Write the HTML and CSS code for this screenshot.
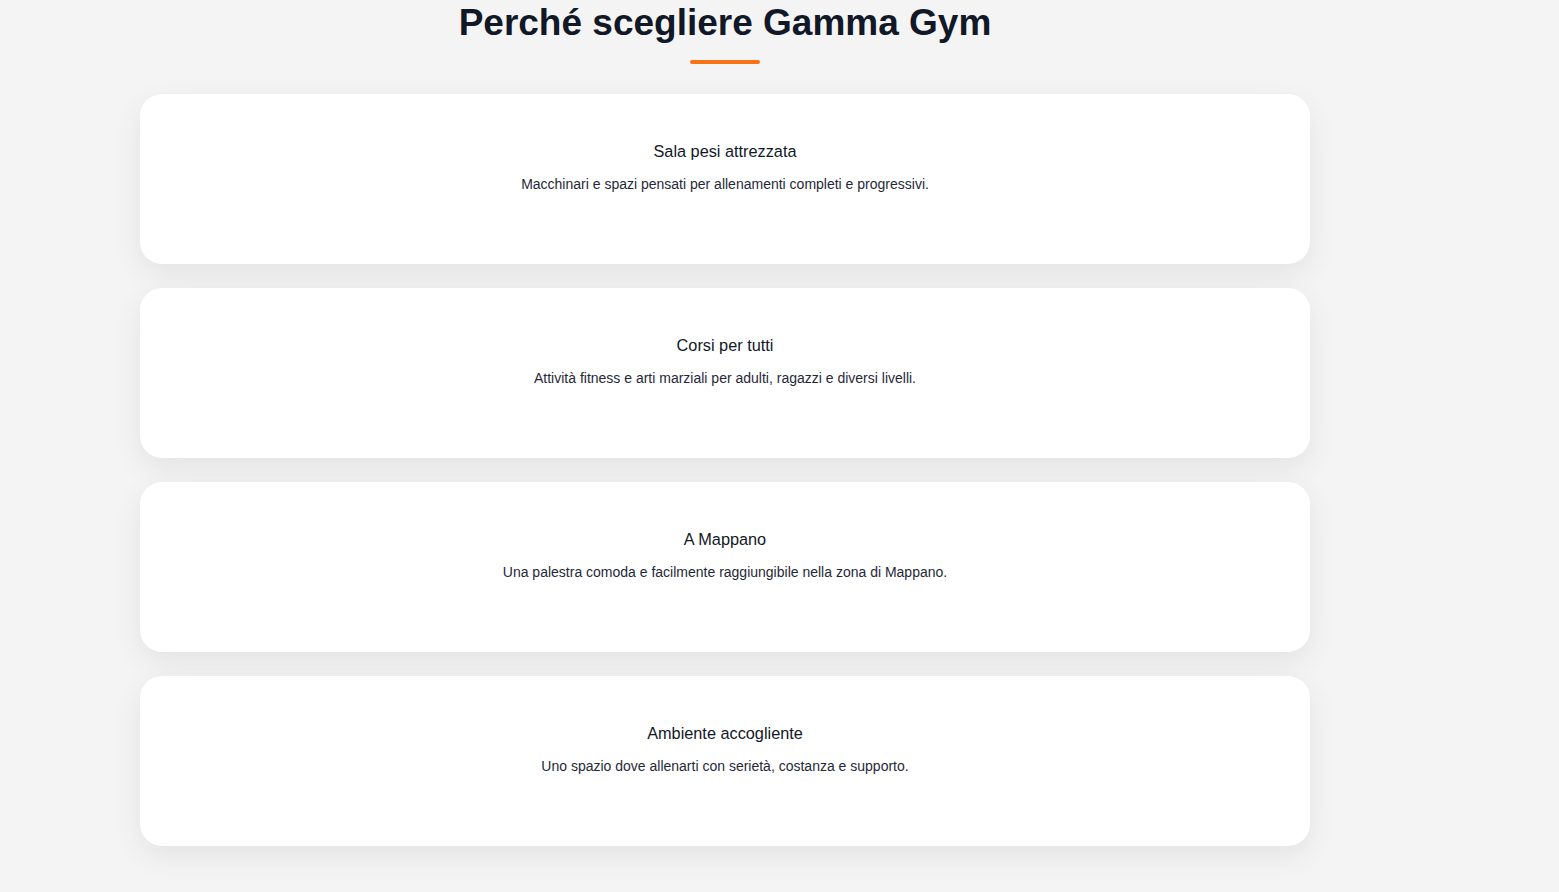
FILE: index.html
```html
<!DOCTYPE html>
<html lang="it">
<head>
<meta charset="utf-8">
<title>Perché scegliere Gamma Gym</title>
<link rel="stylesheet" href="styles.css">
</head>
<body>
<section class="why">
  <h2 class="why-title">Perché scegliere Gamma Gym</h2>
  <div class="why-bar"></div>
  <div class="why-list">
    <article class="card">
      <h3 class="card-title">Sala pesi attrezzata</h3>
      <p class="card-text">Macchinari e spazi pensati per allenamenti completi e progressivi.</p>
    </article>
    <article class="card">
      <h3 class="card-title">Corsi per tutti</h3>
      <p class="card-text">Attività fitness e arti marziali per adulti, ragazzi e diversi livelli.</p>
    </article>
    <article class="card">
      <h3 class="card-title">A Mappano</h3>
      <p class="card-text">Una palestra comoda e facilmente raggiungibile nella zona di Mappano.</p>
    </article>
    <article class="card">
      <h3 class="card-title">Ambiente accogliente</h3>
      <p class="card-text">Uno spazio dove allenarti con serietà, costanza e supporto.</p>
    </article>
  </div>
</section>
</body>
</html>
```
FILE: styles.css
```css
* { box-sizing: border-box; }
html, body {
  margin: 0;
  padding: 0;
  background: #f4f4f4;
  font-family: "Liberation Sans", Arial, sans-serif;
  color: #111827;
}
.why {
  width: 1450px;
  padding: 1px 140px 46px;
  display: flex;
  flex-direction: column;
  align-items: center;
}
.why-title {
  margin: 0;
  font-size: 37px;
  line-height: 44px;
  font-weight: 700;
  color: #111827;
  text-align: center;
}
.why-bar {
  width: 70px;
  height: 4px;
  border-radius: 2px;
  background: #f97316;
  margin-top: 15px;
}
.why-list {
  margin-top: 30px;
  width: 100%;
  display: flex;
  flex-direction: column;
  gap: 24px;
}
.card {
  height: 170px;
  background: #ffffff;
  border-radius: 22px;
  box-shadow: 0 10px 30px rgba(0, 0, 0, 0.07);
  padding: 47px 24px 0;
  text-align: center;
}
.card-title {
  margin: 0;
  font-size: 16.3px;
  line-height: 20px;
  font-weight: 400;
  color: #111827;
}
.card-text {
  margin: 13px 0 0;
  font-size: 14px;
  line-height: 20px;
  color: #1f2937;
}
```
